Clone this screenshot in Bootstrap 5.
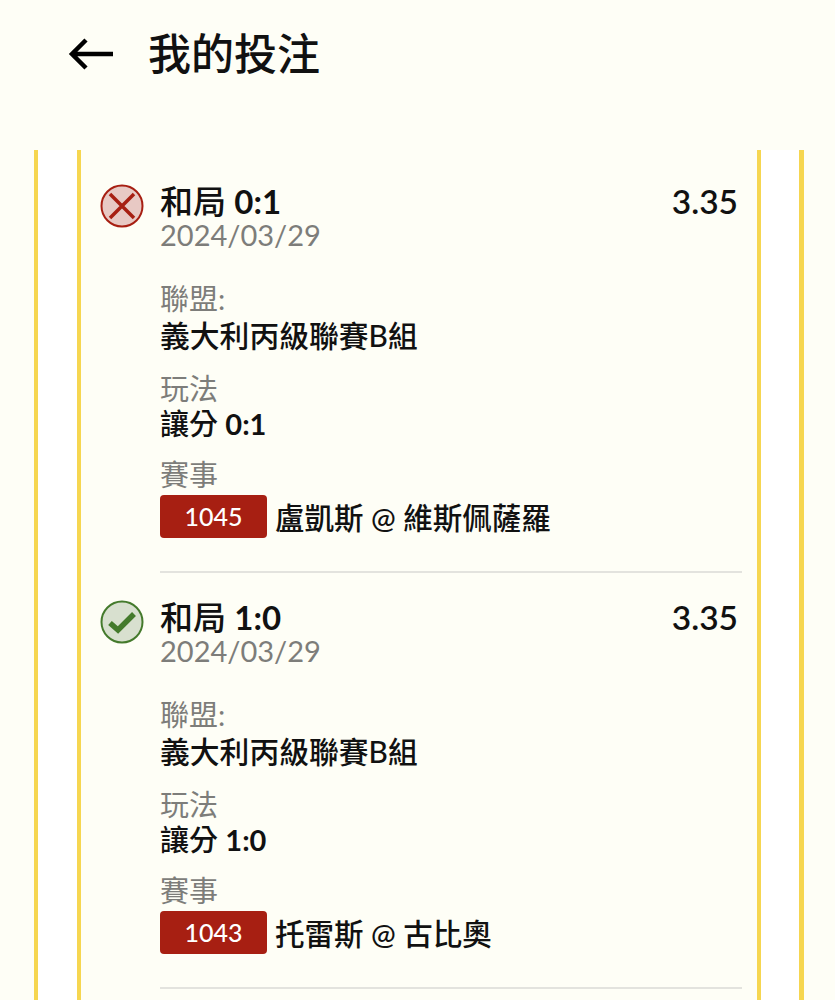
<!DOCTYPE html>
<html>
<head>
    <meta charset="utf-8" />
    <title>我的投注</title>
    <link href="https://cdn.jsdelivr.net/npm/bootstrap@5.3.3/dist/css/bootstrap.min.css" rel="stylesheet">
    <script src="https://cdn.jsdelivr.net/npm/bootstrap@5.3.3/dist/js/bootstrap.bundle.min.js"></script>
    <style>
        html, body { height: 1000px; overflow: hidden; }
        body { background: #fefef6; color: #111; font-family: Lato, "Noto Sans CJK TC", sans-serif; }
        .top-bar { height: 150px; padding: 29px 0 0 68px; gap: 35px; }
        .page-title { font-size: 43px; font-weight: 500; line-height: 50px; margin: 0; margin-left: -1px; }
        .outer-panel { margin: 0 31px 0 34px; background: #fff; border-left: 4px solid #f6d650; border-right: 5px solid #f6d650; padding: 0 38px 0 39px; height: 850px; }
        .inner-panel { background: #fefef6; border-left: 4px solid #f6d650; border-right: 4px solid #f6d650; padding: 7px 15px 0 79px; height: 850px; }
        .bet-item { height: 416px; padding-top: 25px; border-bottom: 2px solid #e3e3de; position: relative; }
        .status-icon { position: absolute; left: -60px; top: 27px; width: 44px; height: 44px; }
        .bet-name { font-size: 33px; line-height: 38px; font-weight: 500; }
        .bet-odds { font-size: 33.5px; line-height: 38px; font-weight: 600; margin-right: 4px; }
        .num-bold { font-weight: 700; }
        .bet-date { font-size: 29px; line-height: 30px; color: #7d7d7a; margin-bottom: 31px; }
        .field-label { font-size: 29px; line-height: 36px; color: #7d7d7a; }
        .field-value { font-size: 29.8px; line-height: 38px; font-weight: 500; margin-bottom: 16px; }
        .tight-value { line-height: 34px; font-size: 29px; }
        .game-no { width: 107px; height: 43px; background: #a71f12; color: #fff; font-size: 25px; border-radius: 4px; }
        .game-row { gap: 8px; height: 43px; font-size: 29.5px; font-weight: 500; margin-top: 2px; }
        .game-teams { line-height: 43px; margin-top: 2px; }
    </style>
</head>
<body>
    <div class="top-bar d-flex align-items-start">
        <svg width="46" height="50" viewBox="0 0 46 50">
            <path d="M3 25H45M18 11 4 25 18 39" fill="none" stroke="#000" stroke-width="4.5" />
        </svg>
        <h1 class="page-title">我的投注</h1>
    </div>
    <div class="outer-panel">
        <div class="inner-panel">
            <div class="bet-item">
                <svg class="status-icon" viewBox="0 0 44 44">
                    <circle cx="22" cy="22" r="20.5" fill="#e8c9c4" stroke="#a71f12" stroke-width="2" />
                    <path d="M10 10 34 34M34 10 10 34" stroke="#a71f12" stroke-width="3.5" fill="none" />
                </svg>
                <div class="d-flex justify-content-between">
                    <div class="bet-name">和局 <span class="num-bold">0:1</span></div>
                    <div class="bet-odds">3.35</div>
                </div>
                <div class="bet-date">2024/03/29</div>
                <div class="field-label">聯盟:</div>
                <div class="field-value">義大利丙級聯賽B組</div>
                <div class="field-label">玩法</div>
                <div class="field-value tight-value">讓分 <span class="num-bold">0:1</span></div>
                <div class="field-label">賽事</div>
                <div class="game-row d-flex align-items-center">
                    <div class="game-no d-flex align-items-center justify-content-center">1045</div>
                    <div class="game-teams">盧凱斯 @ 維斯佩薩羅</div>
                </div>
            </div>
            <div class="bet-item">
                <svg class="status-icon" viewBox="0 0 44 44">
                    <circle cx="22" cy="22" r="20.5" fill="#d8e0cf" stroke="#447a2c" stroke-width="2" />
                    <path d="M10 23 18 30 34 14" stroke="#447a2c" stroke-width="5.5" fill="none" />
                </svg>
                <div class="d-flex justify-content-between">
                    <div class="bet-name">和局 <span class="num-bold">1:0</span></div>
                    <div class="bet-odds">3.35</div>
                </div>
                <div class="bet-date">2024/03/29</div>
                <div class="field-label">聯盟:</div>
                <div class="field-value">義大利丙級聯賽B組</div>
                <div class="field-label">玩法</div>
                <div class="field-value tight-value">讓分 <span class="num-bold">1:0</span></div>
                <div class="field-label">賽事</div>
                <div class="game-row d-flex align-items-center">
                    <div class="game-no d-flex align-items-center justify-content-center">1043</div>
                    <div class="game-teams">托雷斯 @ 古比奧</div>
                </div>
            </div>
        </div>
    </div>
</body>
</html>
